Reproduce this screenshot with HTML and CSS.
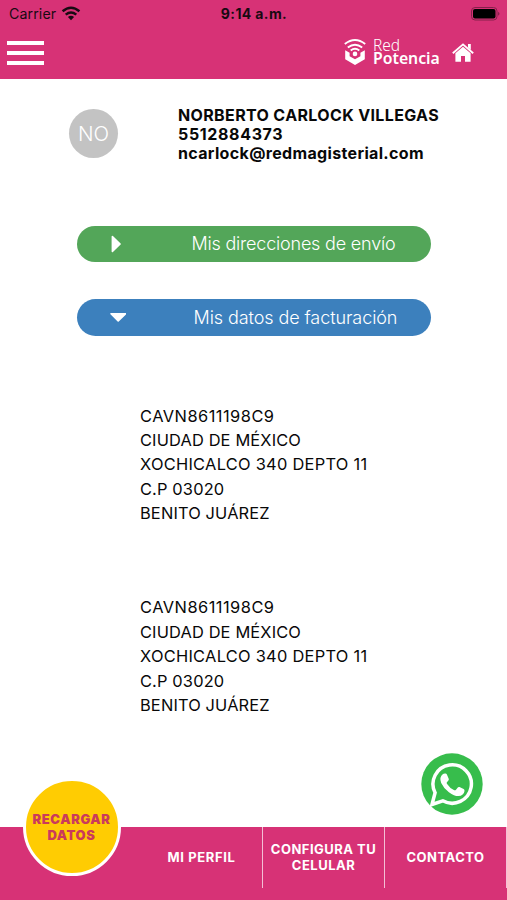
FILE: index.html
```html
<!DOCTYPE html>
<html lang="es">
<head>
<meta charset="utf-8">
<title>Red Potencia</title>
<link rel="stylesheet" href="styles.css">
</head>
<body>
<div class="app">
  <header class="header">
    <div class="status">
      <div class="carrier"><span class="carrier-name">Carrier</span>
        <svg class="wifi" width="20" height="15" viewBox="0 0 20 15"><g fill="none" stroke="#180a12" stroke-width="2.5"><path d="M1.6 5.2Q10-1.8 18.4 5.2"/><path d="M4.7 8.6Q10 4.3 15.3 8.6"/></g><path d="M6.9 11Q10 8.6 13.1 11L10 14.2Z" fill="#180a12"/></svg>
      </div>
      <span class="clock">9:14 a.m.</span>
      <svg class="battery" width="30" height="14" viewBox="0 0 30 14"><rect x=".5" y=".5" width="25.5" height="12.5" rx="3.5" fill="none" stroke="#86204b"/><rect x="2" y="2" width="22.5" height="9.5" rx="2" fill="#000"/><path d="M27.3 4.7q2.2 2 0 4.1z" fill="#6b193c"/></svg>
    </div>
    <nav class="toolbar">
      <div class="menu"><i></i><i></i><i></i></div>
      <div class="brand">
        <svg class="logo" width="22" height="26" viewBox="0 0 22 26"><g fill="none" stroke="#fff" stroke-width="1.9"><path d="M.8 5Q11-3 21.2 5"/><path d="M3.8 8.4Q11 2.900 18.200 8.400"/><path d="M6.700 11.400Q11 8 15.300 11.400"/></g><circle cx="11" cy="14.900" r="2.300" fill="#fff"/><path d="M1.200 11.300L5.600 13.700V17.300L11 20.300L16.400 17.300V13.700L20.800 11.300V20.200L11 25.900L1.200 20.200Z" fill="#fff"/></svg>
        <div class="brand-text"><span class="red">Red</span><span class="potencia">Potencia</span></div>
      </div>
      <svg class="home" width="22" height="19" viewBox="0 0 22 19"><path d="M.8 10.2L11 1.4L21.2 10.2" fill="none" stroke="#fff" stroke-width="1.9"/><path d="M16 1H18.8V7L16 4.5ZM11 3.7L18.6 10.3V18.7H13V13H9V18.7H3.4V10.3Z" fill="#fff"/></svg>
    </nav>
  </header>
  <main class="content">
    <section class="profile">
      <div class="avatar">NO</div>
      <div class="identity"><span class="name">NORBERTO CARLOCK VILLEGAS</span><span class="phone">5512884373</span><span class="mail">ncarlock@redmagisterial.com</span></div>
    </section>
    <div class="pill green"><svg class="arrow" width="20" height="20" viewBox="0 0 20 20"><path d="M6.4 2.5L14.1 10L6.4 17.5Z"/></svg><span class="envio">Mis direcciones de envío</span></div>
    <div class="pill blue"><svg class="arrow down" width="20" height="20" viewBox="0 0 20 20"><path d="M5 6.8H19.5L12.2 14Z"/></svg><span class="factura">Mis datos de facturación</span></div>
    <address class="address"><span class="rfc">CAVN8611198C9</span><span>CIUDAD DE MÉXICO</span><span class="street">XOCHICALCO 340 DEPTO 11</span><span>C.P 03020</span><span>BENITO JUÁREZ</span></address>
    <address class="address"><span class="rfc">CAVN8611198C9</span><span>CIUDAD DE MÉXICO</span><span class="street">XOCHICALCO 340 DEPTO 11</span><span>C.P 03020</span><span>BENITO JUÁREZ</span></address>
  </main>
  <svg class="whatsapp" width="62" height="62" viewBox="0 0 62 62"><circle cx="31" cy="31" r="30.7" fill="#37bd4c"/><path d="M11 51.5L14.1 39.8A19.2 19.2 0 1 1 21.8 47.8Z" fill="none" stroke="#fff" stroke-width="3.5"/><path d="M24.300 20.400q1.100-.1 1.600 1l1.800 4.300q.4 1-.3 1.800l-1.500 1.800q-.5.6 0 1.400 3 4.700 7.400 6.500.9.4 1.500-.3l2-2.500q.7-.8 1.700-.3l4.100 2q1.100.5.9 1.800-.6 4.600-6.200 5.200-3.800.1-9.400-3.900-5.400-4-7.700-9.200-2.300-6 1.800-9.100.8-.6 2.300-.5z" fill="#fff"/></svg>
  <footer class="footer">
    <div class="tab first"><div class="reload"><span>RECARGAR</span><span class="datos">DATOS</span></div></div>
    <div class="tab"><span class="perfil">MI PERFIL</span></div>
    <div class="tab"><span>CONFIGURA TU</span><span>CELULAR</span></div>
    <div class="tab"><span>CONTACTO</span></div>
  </footer>
</div>
</body>
</html>
```
FILE: styles.css
```css
* { box-sizing: border-box; }
body { margin: 0; background: #fff; font-family: Inter, "Liberation Sans", sans-serif; color: #080808; }
.app { position: relative; width: 507px; height: 900px; display: flex; flex-direction: column; overflow: hidden; }
.app span { white-space: nowrap; }
svg { display: block; flex: none; }
.header { height: 79px; background: #d73276; flex: none; }
.status { height: 27px; display: grid; grid-template-columns: 1fr auto 1fr; align-items: center; padding: 0 6px 0 9px; color: #180a12; }
.carrier { display: flex; gap: 6px; align-items: center; font-size: 14.2px; }
.carrier-name { letter-spacing: .1px; }
.wifi { margin-left: -1px; }
.clock { font-size: 14px; font-weight: 700; letter-spacing: .38px; margin-left: -2px; }
.battery { justify-self: end; }
.toolbar { height: 52px; display: flex; align-items: center; padding: 0 33px 0 7px; }
.menu { width: 37px; display: flex; flex-direction: column; gap: 5.5px; }
.menu i { height: 4.6px; background: #fff; }
.brand { margin-left: auto; display: flex; align-items: center; gap: 7px; color: #fff; }
.logo { margin-bottom: 2px; }
.brand-text { display: flex; flex-direction: column; width: 67px; font-family: "Noto Sans", sans-serif; line-height: 13px; font-size: 15.8px; margin-top: -2px; }
.red { font-weight: 300; font-size: 15.5px; line-height: 12px; }
.potencia { font-weight: 600; line-height: 14px; }
.home { margin: 0 0 2px 12px; }
.content { flex: 1; }
.profile { display: flex; align-items: center; padding: 27px 0 0 69px; }
.avatar { width: 49px; height: 49px; margin-top: -2px; border-radius: 50%; background: #c3c3c3; color: #fff; display: flex; align-items: center; justify-content: center; font-size: 20.5px; font-weight: 300; }
.identity { display: flex; flex-direction: column; margin-left: 60px; font-size: 16px; line-height: 19px; font-weight: 700; }
.name { letter-spacing: .36px; }
.phone { letter-spacing: .65px; }
.mail { letter-spacing: .34px; }
.pill { width: 354px; height: 36.5px; border-radius: 19px; margin-left: 77px; display: flex; align-items: center; padding-left: 29px; color: #fff; font-size: 18px; font-weight: 300; }
.arrow { fill: #fff; stroke: #fff; stroke-width: 1.6; stroke-linejoin: round; }
.green { margin-top: 62.5px; background: #53a659; }
.blue { margin-top: 37px; background: #3c80bd; }
.envio { margin-left: 65.5px; letter-spacing: -.2px; }
.factura { margin-left: 67.5px; letter-spacing: -.08px; }
.address { display: flex; flex-direction: column; margin: 68px 0 0 140px; font-style: normal; font-size: 16.4px; line-height: 24.4px; letter-spacing: .15px; }
.rfc { letter-spacing: .48px; }
.street { letter-spacing: .28px; }
.address + .address { margin-top: 69.8px; }
.whatsapp { position: absolute; left: 421px; top: 753px; }
.footer { height: 73.5px; background: #d73276; display: grid; grid-template-columns: 141px 122px 122px 122px; flex: none; color: #fff; }
.tab { height: 61.5px; display: flex; flex-direction: column; align-items: center; justify-content: center; font-size: 13px; line-height: 16px; font-weight: 700; letter-spacing: .48px; border-right: 1.5px solid #f3bfd5; }
.perfil { letter-spacing: .65px; }
.tab.first { border: 0; position: relative; }
.reload { position: absolute; left: 22.5px; top: -49px; width: 98px; height: 98px; border: 3.5px solid #fff; border-radius: 50%; background: #ffcc02; color: #ca3b5b; display: flex; flex-direction: column; align-items: center; justify-content: center; font-weight: 900; letter-spacing: .6px; }
```
